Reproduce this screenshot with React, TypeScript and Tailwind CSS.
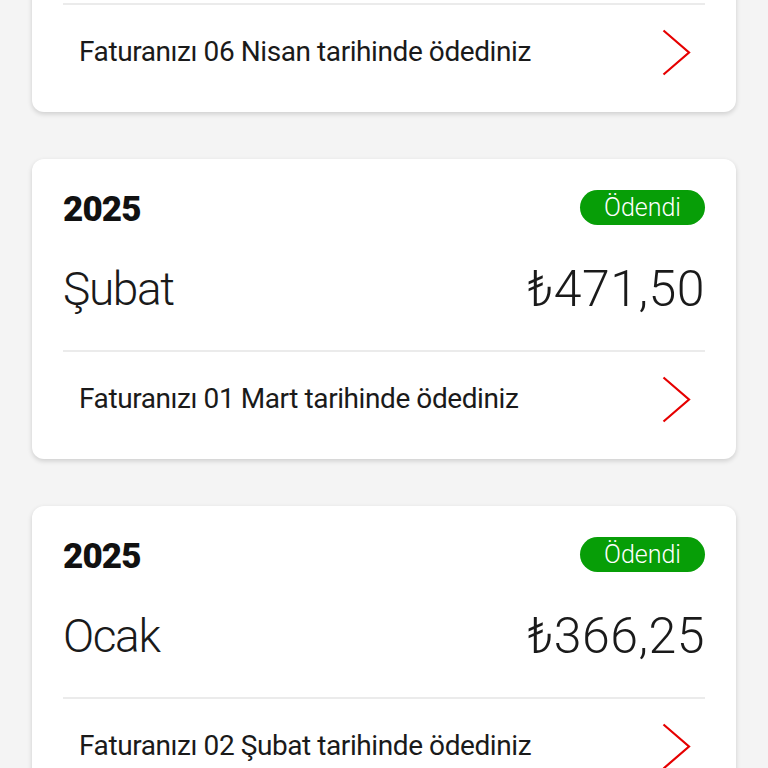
const BILLS = [
  { year: "2025", month: "Mart", amount: "₺489,75", paid: "06 Nisan" },
  { year: "2025", month: "Şubat", amount: "₺471,50", paid: "01 Mart" },
  { year: "2025", month: "Ocak", amount: "₺366,25", paid: "02 Şubat" },
];

function Chevron() {
  return (
    <svg width="29" height="47" viewBox="0 0 29 47" fill="none" className="shrink-0">
      <path d="M1.5 1.5 L27 23.5 L1.5 45.5" stroke="#e60000" strokeWidth="2.2" strokeLinejoin="miter" />
    </svg>
  );
}

function BillCard({ bill }: { bill: (typeof BILLS)[number] }) {
  return (
    <div className="rounded-[12px] bg-white shadow-[0_2px_5px_rgba(0,0,0,0.16)]">
      <div className="px-[31px] pt-[31px] pb-[34px]">
        <div className="flex h-[35px] items-center justify-between">
          <span className="pt-[4px] text-[35px] font-black leading-none tracking-tight text-[#111]">{bill.year}</span>
          <span className="flex h-[35px] w-[125px] items-center justify-center rounded-full bg-[#079e07] text-[25px] font-light leading-none text-white">
            Ödendi
          </span>
        </div>
        <div className="mt-[36px] flex h-[55px] items-center justify-between font-light leading-none text-[#1a1a1a]">
          <span className="text-[46px] tracking-[-0.03em]">{bill.month}</span>
          <span className="text-[50px] tracking-[0.01em]">{bill.amount}</span>
        </div>
      </div>
      <div className="mx-[31px] border-t-2 border-[#ebebeb]" />
      <div className="flex h-[107px] items-start justify-between pt-[24px] pl-[47px] pr-[45px]">
        <div className="flex h-[46px] items-center text-[28px] leading-none tracking-[-0.015em] text-[#1a1a1a]">
          Faturanızı {bill.paid} tarihinde ödediniz
        </div>
        <Chevron />
      </div>
    </div>
  );
}

export default function App() {
  return (
    <div
      className="h-[768px] w-[768px] overflow-hidden bg-[#f4f4f4] px-[32px]"
      style={{ fontFamily: "Roboto, 'Noto Sans', sans-serif" }}
    >
      <div className="-mt-[188px] flex flex-col gap-[47px]">
        {BILLS.map((b) => (
          <BillCard key={b.month} bill={b} />
        ))}
      </div>
    </div>
  );
}
